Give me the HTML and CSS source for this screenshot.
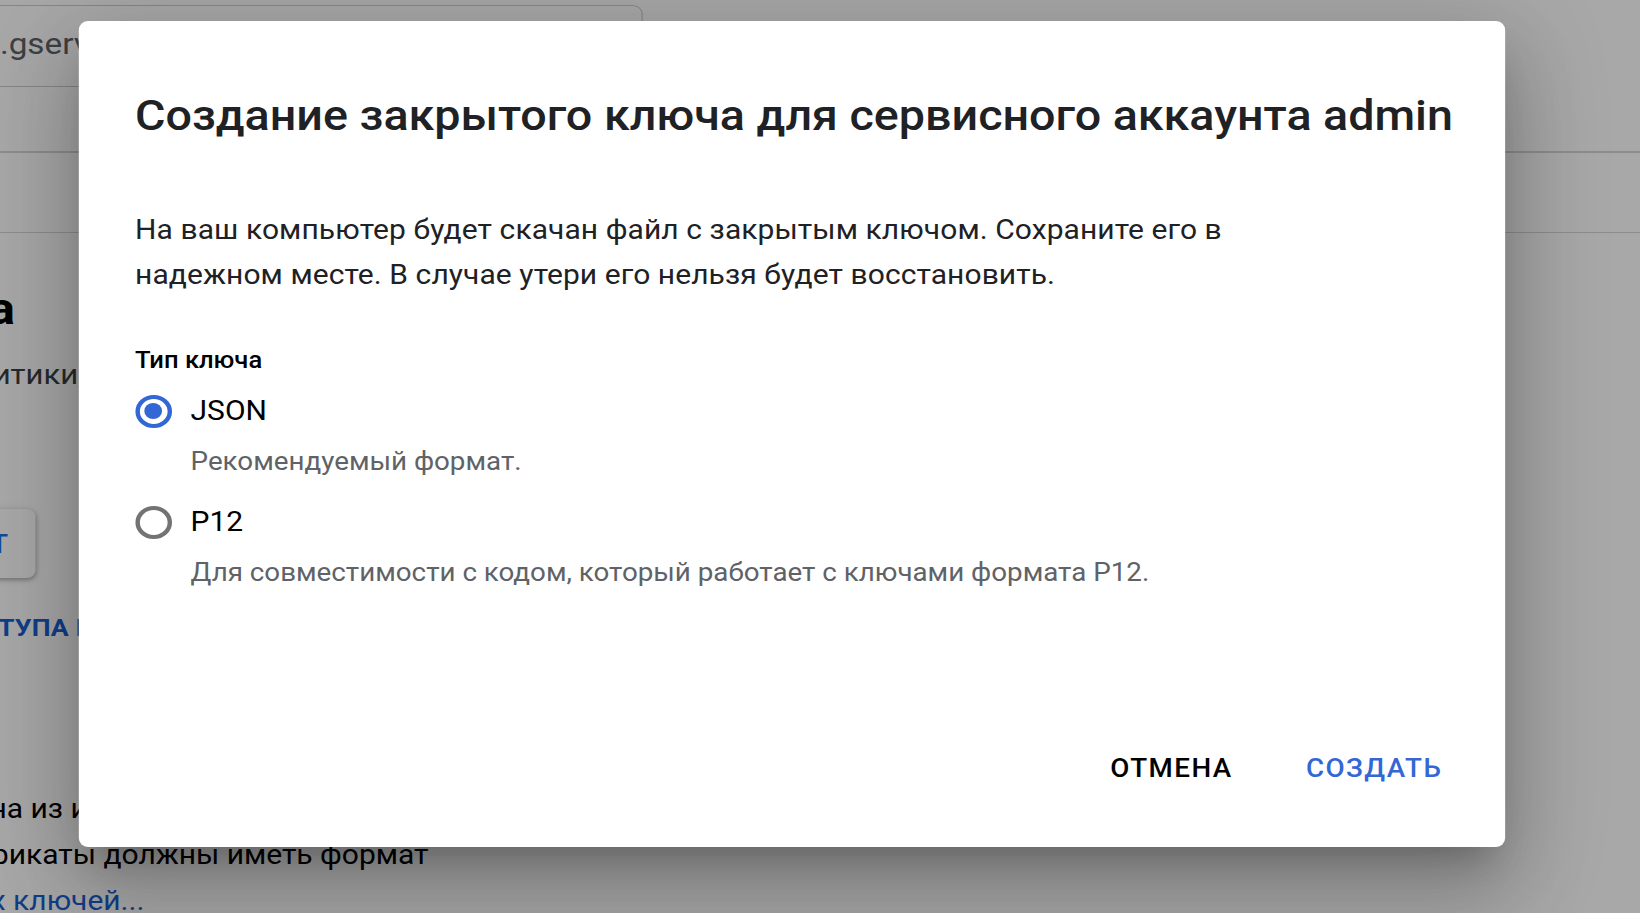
FILE: index.html
```html
<!DOCTYPE html>
<html lang="ru">
<head>
<meta charset="utf-8">
<title>Создание закрытого ключа</title>
<link rel="stylesheet" href="styles.css">
</head>
<body>
<div class="stage">
  <div class="page">
    <div class="field">
      <div class="pl pl-field"><span>admin@project-431.iam.gserv</span></div>
    </div>
    <div class="divider d1"></div>
    <div class="divider d2"></div>
    <div class="pl pl-heading"><span>Ключи сервисного аккаунта</span></div>
    <div class="pl pl-sub"><span>Добавьте ключ или примените политики,</span></div>
    <div class="ghost-btn"><span>ЭКСПОРТ</span></div>
    <div class="pl pl-link"><span>ПРАВА ДОСТУПА К</span></div>
    <div class="para">
      <div class="pl pl-p1"><span>Загрузите ключ, созданный на из и</span></div>
      <div class="pl pl-p2"><span>Сертификаты должны иметь формат</span></div>
      <div class="pl pl-p3 link"><span>Форматы открытых ключей...</span></div>
    </div>
  </div>

  <div class="scrim"></div>

  <div class="dialog" role="dialog" aria-labelledby="dlg-title">
    <h2 class="title" id="dlg-title">Создание закрытого ключа для сервисного аккаунта admin</h2>
    <p class="intro">На ваш компьютер будет скачан файл с закрытым ключом. Сохраните его в надежном месте. В случае утери его нельзя будет восстановить.</p>
    <div class="group-label">Тип ключа</div>
    <div class="option opt-json">
      <span class="radio checked"></span>
      <span class="opt-name">JSON</span>
    </div>
    <div class="opt-desc desc-json">Рекомендуемый формат.</div>
    <div class="option opt-p12">
      <span class="radio"></span>
      <span class="opt-name">P12</span>
    </div>
    <div class="opt-desc desc-p12">Для совместимости с кодом, который работает с ключами формата P12.</div>
    <div class="actions">
      <button class="btn">ОТМЕНА</button>
      <button class="btn primary">СОЗДАТЬ</button>
    </div>
  </div>
</div>
</body>
</html>
```

FILE: styles.css
```css
* { box-sizing: border-box; }

html, body {
  margin: 0;
  padding: 0;
  width: 1640px;
  height: 913px;
  overflow: hidden;
  font-family: Roboto, "Noto Sans", Arial, sans-serif;
  color: #202124;
  background: #a8a8a8;
}

/* the captured screen is stretched horizontally by ~11% */
.stage {
  position: relative;
  width: 1478px;
  height: 913px;
  transform: scaleX(1.11);
  transform-origin: 0 0;
  overflow: hidden;
}

/* ---------- underlying page ---------- */
.page {
  width: 1478px;
  height: 913px;
  background: #ffffff;
  display: flex;
  flex-direction: column;
  overflow: hidden;
}

.pl {
  display: flex;
  justify-content: flex-end;
  white-space: nowrap;
  flex-shrink: 0;
}
.pl > span { flex-shrink: 0; }

.field {
  margin-top: 5px;
  margin-left: -300px;
  width: 879px;
  height: 82px;
  border: 1.5px solid #c9cbcf;
  border-radius: 9px;
  display: flex;
  align-items: center;
  flex-shrink: 0;
}
.pl-field {
  width: 380px;
  font-size: 30px;
  line-height: 40px;
  color: #5f6368;
  margin-top: -4px;
}

.divider {
  height: 1.5px;
  background: #d4d6da;
  flex-shrink: 0;
}
.d1 { margin-top: 64px; }
.d2 { margin-top: 79px; }

.pl-heading {
  width: 13.5px;
  margin-top: 48px;
  font-size: 44px;
  line-height: 56px;
  font-weight: 700;
  color: #000;
}
.pl-sub {
  width: 76px;
  margin-top: 18px;
  font-size: 28px;
  line-height: 40px;
  color: #3c4043;
}

.ghost-btn {
  margin-top: 114px;
  margin-left: -168px;
  width: 200px;
  height: 69px;
  border-radius: 8px;
  background: #fff;
  box-shadow: 0 2px 4px rgba(0,0,0,.25), 0 1px 8px rgba(0,0,0,.12);
  display: flex;
  justify-content: flex-end;
  align-items: center;
  padding-right: 24px;
  font-size: 26px;
  font-weight: 500;
  letter-spacing: 0.8px;
  color: #1a73e8;
  white-space: nowrap;
  flex-shrink: 0;
}

.pl-link {
  width: 84px;
  margin-top: 27px;
  font-size: 24px;
  line-height: 46px;
  font-weight: 700;
  letter-spacing: 0.2px;
  color: #1a5fd0;
}

.para {
  margin-top: 135px;
  font-size: 27px;
  line-height: 46px;
  color: #000;
  flex-shrink: 0;
}
.pl-p1 { width: 79px; }
.pl-p2 { width: 386px; }
.pl-p3 { width: 130px; }
.link { color: #1a5fd0; }

/* ---------- scrim ---------- */
.scrim {
  position: absolute;
  inset: 0;
  background: rgba(0, 0, 0, 0.34);
}

/* ---------- dialog ---------- */
.dialog {
  position: absolute;
  left: 71.2px;
  top: 21px;
  width: 1284.7px;
  height: 826px;
  background: #fff;
  border-radius: 8px / 9px;
  padding: 71px 50.5px 42px 50.5px;
  display: flex;
  flex-direction: column;
  box-shadow:
    0 22px 30px -14px rgba(0,0,0,.22),
    0 48px 76px 6px rgba(0,0,0,.16),
    0 18px 92px 16px rgba(0,0,0,.13);
}

.title {
  margin: 0;
  font-size: 42px;
  line-height: 48px;
  font-weight: 500;
  color: #202124;
  white-space: nowrap;
}

.intro {
  margin: 68px 0 0 0;
  max-width: 1030px;
  font-size: 27px;
  line-height: 45px;
  letter-spacing: 0.08px;
  color: #202124;
}

.group-label {
  margin-top: 47px;
  font-size: 23px;
  line-height: 32px;
  font-weight: 500;
  color: #000;
}

.option {
  display: flex;
  align-items: center;
  height: 36px;
  gap: 17px;
}
.opt-json { margin-top: 16px; }
.opt-p12 { margin-top: 26px; }

.radio {
  width: 33px;
  height: 33px;
  border-radius: 50%;
  border: 4px solid #737373;
  display: flex;
  align-items: center;
  justify-content: center;
  flex-shrink: 0;
}
.radio.checked { border-color: #3367d6; }
.radio.checked::after {
  content: "";
  width: 16px;
  height: 16px;
  border-radius: 50%;
  background: #3367d6;
}

.opt-name {
  font-size: 27px;
  line-height: 36px;
  color: #000;
}

.opt-desc {
  padding-left: 50px;
  margin-top: 17px;
  font-size: 25px;
  line-height: 32px;
  color: #5f6368;
}

.actions {
  margin-top: auto;
  display: flex;
  justify-content: flex-end;
  gap: 34px;
  margin-right: -10px;
}

.btn {
  height: 72px;
  padding: 0 16px;
  border: none;
  background: transparent;
  font-family: Roboto, "Noto Sans", Arial, sans-serif;
  font-size: 25px;
  line-height: 72px;
  font-weight: 500;
  color: #000;
  letter-spacing: 1.3px;
  border-radius: 6px;
  cursor: pointer;
}
.btn.primary { color: #3367d6; }
```
